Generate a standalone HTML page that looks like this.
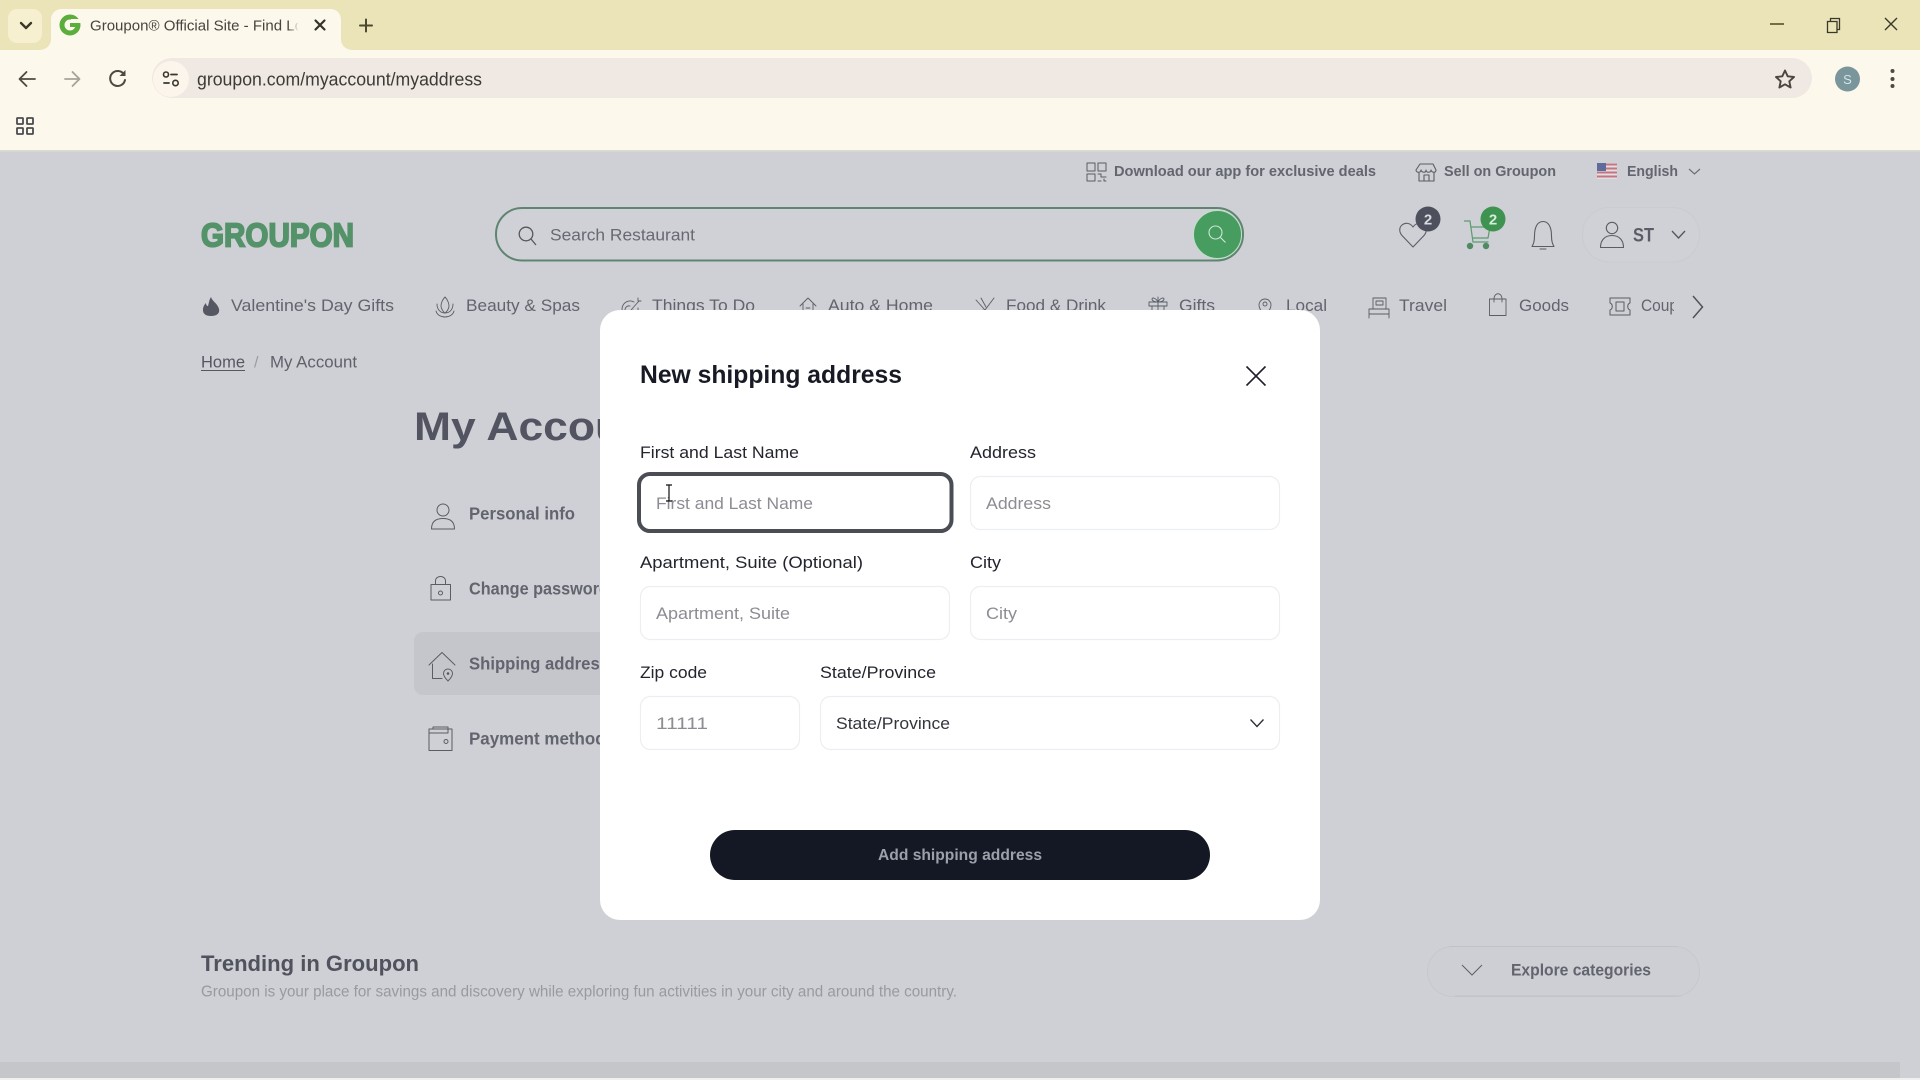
<!DOCTYPE html>
<html lang="en"><head><meta charset="utf-8"><title>Groupon - My Account</title>
<style>
html,body{margin:0;padding:0;width:1920px;height:1080px;overflow:hidden;background:#cfd0d5}
svg{display:block;position:absolute;left:0;top:0}
text{font-family:"Liberation Sans",sans-serif;white-space:pre}
.ic{fill:none;stroke:#5a5c66;stroke-linecap:round;stroke-linejoin:round}
.nav{font-size:17px;fill:#62646f}
.side{font-size:17.5px;font-weight:700;fill:#62646f}
.top{font-size:15px;font-weight:700;fill:#63656f}
.lab{font-size:17px;fill:#23252e}
.ph{font-size:17px;fill:#8b8d93}
.inp{fill:#fff;stroke:#eceef1;stroke-width:1.2}
</style></head><body>
<svg width="1920" height="1080" viewBox="0 0 1920 1080" xmlns="http://www.w3.org/2000/svg">
<defs>
<linearGradient id="fade" x1="0" x2="1" y1="0" y2="0"><stop offset="0" stop-color="#fdf8ec" stop-opacity="0"/><stop offset=".6" stop-color="#fdf8ec"/><stop offset="1" stop-color="#fdf8ec"/></linearGradient>
<clipPath id="cmy"><rect x="400" y="380" width="200" height="100"/></clipPath>
<clipPath id="ccoup"><rect x="1600" y="280" width="74" height="50"/></clipPath>
</defs>

<!-- browser chrome -->
<rect width="1920" height="50" fill="#ebe4b8"/>
<rect y="50" width="1920" height="100" fill="#fdf8ec"/>
<rect x="8" y="9" width="34" height="34" rx="9" fill="#f7f0d0"/>
<path d="M21 23l5 5 5-5" fill="none" stroke="#3a3828" stroke-width="2.4" stroke-linecap="round" stroke-linejoin="round"/>
<path d="M38 50c8 0 13-4 13-11V20c0-7 5-11 11-11h268c7 0 11 5 11 11v19c0 7 5 11 13 11z" fill="#fdf8ec"/>
<circle cx="70" cy="25" r="8" fill="none" stroke="#5cae3c" stroke-width="5"/>
<rect x="70" y="23" width="10" height="4" fill="#5cae3c"/>
<path d="M71 19h10v4H71z" fill="#fdf8ec"/>
<text x="90" y="30.500" font-size="15" fill="#45443e" textLength="213" lengthAdjust="spacingAndGlyphs">Groupon® Official Site - Find Lo</text>
<rect x="288" y="12" width="18" height="28" fill="url(#fade)"/>
<path d="M315.500 20.500l9 9m0-9l-9 9" stroke="#33322b" stroke-width="2.200" stroke-linecap="round"/>
<path d="M366 19.500v12M360 25.500h12" stroke="#4a4830" stroke-width="2" stroke-linecap="round"/>
<path d="M1770 24h14" stroke="#6a5f3c" stroke-width="1.800"/>
<path d="M1827.500 21.500h9.500v11h-9.500z M1830.500 21v-2.500h9v11h-2.500" fill="none" stroke="#3a3828" stroke-width="1.300"/>
<path d="M1885 18l12 12m0-12l-12 12" stroke="#3a3828" stroke-width="1.400"/>

<rect x="152" y="58" width="1660" height="40" rx="20" fill="#efe8e3"/>
<circle cx="171" cy="79" r="18" fill="#fbf5ec"/>
<path d="M171 74.500h6M164 83h5" stroke="#38362f" stroke-width="1.800" fill="none" stroke-linecap="round"/>
<circle cx="166" cy="74.500" r="2.500" fill="none" stroke="#38362f" stroke-width="1.600"/>
<circle cx="175.500" cy="83" r="2.700" fill="none" stroke="#38362f" stroke-width="1.600"/>
<path d="M35 79H20m6.500-7l-7 7 7 7" fill="none" stroke="#4c4a42" stroke-width="1.800" stroke-linecap="round" stroke-linejoin="round"/>
<path d="M65 79h14m-6.500-7l7 7-7 7" fill="none" stroke="#a6a39a" stroke-width="1.800" stroke-linecap="round" stroke-linejoin="round"/>
<path d="M124 74.500a7.500 7.500 0 1 0 1 5.500" fill="none" stroke="#4c4a42" stroke-width="2" stroke-linecap="round"/>
<path d="M125.500 70v6h-6z" fill="#4c4a42"/>
<text x="197" y="85.500" font-size="18" fill="#3c3b36" textLength="285" lengthAdjust="spacingAndGlyphs">groupon.com/myaccount/myaddress</text>
<path d="M1785 70.500l2.700 5.800 6.300.7-4.700 4.300 1.300 6.200-5.600-3.200-5.600 3.200 1.300-6.200-4.700-4.300 6.300-.7z" fill="none" stroke="#4c4640" stroke-width="1.900" stroke-linejoin="round"/>
<ellipse cx="1847.500" cy="79" rx="12.500" ry="12.500" fill="#7a959c"/>
<text x="1847.500" y="84" font-size="13" fill="#cfe6ea" text-anchor="middle">S</text>
<circle cx="1892.500" cy="71" r="2" fill="#4c4a42"/><circle cx="1892.500" cy="79" r="2" fill="#4c4a42"/><circle cx="1892.500" cy="86" r="2" fill="#4c4a42"/>
<g fill="none" stroke="#4a4c50" stroke-width="1.800"><rect x="17" y="118" width="6" height="6" rx=".5"/><rect x="27" y="118" width="6" height="6" rx=".5"/><rect x="17" y="128" width="6" height="6" rx=".5"/><rect x="27" y="128" width="6" height="6" rx=".5"/></g>

<!-- page (dimmed) -->
<rect y="150" width="1920" height="930" fill="#cfd0d5"/>
<rect y="150" width="1920" height="1.500" fill="#dcdcd0"/>

<!-- top bar -->
<g class="ic" stroke-width="1"><rect x="1087" y="163" width="8" height="8"/><rect x="1098" y="163" width="8" height="8"/><rect x="1087" y="174" width="8" height="7"/><path d="M1098 174h3v3h5M1098 181h3M1104 179v2h2"/></g>
<text class="top" x="1114" y="176" textLength="262" lengthAdjust="spacingAndGlyphs">Download our app for exclusive deals</text>
<path class="ic" stroke-width="1.100" d="M1420 164h13l3 6c0 3-4 3-5 0 0 3-5 3-5 0 0 3-4 3-5 0 0 3-5 3-5 0zM1419 173v8h15v-8M1424 181v-6h5v6"/>
<text class="top" x="1444" y="176" textLength="112" lengthAdjust="spacingAndGlyphs">Sell on Groupon</text>
<g><rect x="1597" y="163" width="20" height="16" fill="#dfe0e6"/><path d="M1597 164.500h20M1597 168.500h20M1597 172.500h20M1597 176.500h20" stroke="#c8747f" stroke-width="2"/><rect x="1597" y="163" width="9" height="8" fill="#5d6c9a"/></g>
<text class="top" x="1627" y="176" textLength="51" lengthAdjust="spacingAndGlyphs">English</text>
<path d="M1689 169l5.500 5 5.500-5" fill="none" stroke="#6c6e78" stroke-width="1.200"/>

<!-- logo + search -->
<text x="201" y="246.500" font-size="33" font-weight="700" fill="#54926a" stroke="#54926a" stroke-width="1.800" textLength="153" lengthAdjust="spacingAndGlyphs">GROUPON</text>
<rect x="496" y="208" width="747" height="52.500" rx="26" fill="#cfd1d6" stroke="#5f8571" stroke-width="2"/>
<circle cx="526" cy="234" r="6.800" fill="none" stroke="#55575f" stroke-width="1.300"/><path d="M531 239l5 6" stroke="#55575f" stroke-width="1.300"/>
<text x="550" y="240.500" font-size="17" fill="#676973" textLength="145" lengthAdjust="spacingAndGlyphs">Search Restaurant</text>
<circle cx="1217.500" cy="234.500" r="24" fill="#479c60" stroke="#bfe0c8" stroke-width="1"/>
<circle cx="1215.500" cy="232.500" r="6.500" fill="none" stroke="#cfe6d6" stroke-width="1.100"/><path d="M1220.500 237.500l5 5" stroke="#cfe6d6" stroke-width="1.100"/>

<!-- header icons -->
<path class="ic" stroke-width="1.100" d="M1413 247l-11-11.500c-3-3.500-3-8 0-10.500 3-2.500 8-2.500 11 2 3-4.500 8-4.500 11-2 3 2.500 3 7 0 10.500z"/>
<circle cx="1428" cy="219" r="12.500" fill="#4e505d"/>
<text x="1428" y="224.500" font-size="15" font-weight="700" fill="#d9dae0" text-anchor="middle">2</text>
<path d="M1464 221h6l3 21h15.500M1471 227h19l-2 11h-16" fill="none" stroke="#5c9a70" stroke-width="1.200"/>
<circle cx="1470" cy="246" r="3.200" fill="#4f8a64"/><circle cx="1486" cy="246" r="3.200" fill="#4f8a64"/>
<circle cx="1493" cy="219" r="12.500" fill="#3f9350"/>
<text x="1493" y="224.500" font-size="15" font-weight="700" fill="#d5ecd9" text-anchor="middle">2</text>
<path class="ic" stroke-width="1.100" d="M1532 246.500c2-3 2.500-6 2.500-10.500 0-9 3-14.500 8.500-14.500s8.500 5.500 8.500 14.500c0 4.500.5 7.500 2.500 10.500zM1540 249h6"/>
<rect x="1582.500" y="207.500" width="117" height="54.500" rx="27" fill="#cfd1d7" stroke="#c9cbd0" stroke-width="1"/>
<circle cx="1612" cy="228" r="5.700" class="ic" stroke-width="1.100"/>
<path class="ic" stroke-width="1.100" d="M1600.500 247.500c0-7 4-12 11.500-12s11.500 5 11.500 12z"/>
<text x="1633" y="241.500" font-size="19" font-weight="700" fill="#5a5c68" textLength="21" lengthAdjust="spacingAndGlyphs">ST</text>
<path d="M1672 231l6.500 7 6.500-7" fill="none" stroke="#53555f" stroke-width="1.300"/>

<!-- nav -->
<path d="M211 297c1 4 7 7 8 12 1 5-3 7-8 7-5 0-8.500-2-8-7 .3-3 2-5 3-6 0 2 1 3 2 3 1-3 1-6 3-9z" fill="#555763"/>
<text class="nav" x="231" y="311" textLength="163" lengthAdjust="spacingAndGlyphs">Valentine's Day Gifts</text>
<path class="ic" stroke-width=".9" d="M445 297c-3 3-4 7-4 9s2 6 4 7c2-1 4-5 4-7s-1-6-4-9zM437 304c0 5 3 9 8 9s8-4 8-9M436 311c1 4 5 6 9 6s8-2 9-6"/>
<text class="nav" x="466" y="311" textLength="114" lengthAdjust="spacingAndGlyphs">Beauty &amp; Spas</text>
<path class="ic" stroke-width=".9" d="M634 302a8 8 0 1 0 4 6M630 306a4 4 0 1 0 3 4M631 310l8-9M638 298v3h3"/>
<text class="nav" x="652" y="311" textLength="103" lengthAdjust="spacingAndGlyphs">Things To Do</text>
<path class="ic" stroke-width=".9" d="M800 306l8-8 8 8M803 304v10h10v-10M806 308h4"/>
<text class="nav" x="828" y="311" textLength="105" lengthAdjust="spacingAndGlyphs">Auto &amp; Home</text>
<path class="ic" stroke-width=".9" d="M976 300l9 10 9-12M981 298l5 9M986 314l-3-4"/>
<text class="nav" x="1006" y="311" textLength="100" lengthAdjust="spacingAndGlyphs">Food &amp; Drink</text>
<path class="ic" stroke-width=".9" d="M1149 302h18v4h-18zM1158 297v20M1152 306v10h12v-10M1158 302c-2-4-6-5-6-3s3 3 6 3c2-4 6-5 6-3s-3 3-6 3"/>
<text class="nav" x="1179" y="311" textLength="36" lengthAdjust="spacingAndGlyphs">Gifts</text>
<path class="ic" stroke-width=".9" d="M1265 316c-3-4-6-7-6-11a6 6 0 0 1 12 0c0 4-3 7-6 11z"/><circle class="ic" stroke-width=".9" cx="1265" cy="304" r="2"/>
<text class="nav" x="1286" y="311" textLength="41" lengthAdjust="spacingAndGlyphs">Local</text>
<path class="ic" stroke-width=".9" d="M1373 309v-11h13v11M1369 314v-5h20v5zM1369 314v4M1389 314v4M1376 301h7v4h-7z"/>
<text class="nav" x="1399" y="311" textLength="48" lengthAdjust="spacingAndGlyphs">Travel</text>
<path class="ic" stroke-width=".9" d="M1489.500 299h16.500v16.500h-16.500zM1494 302v-3c0-7 8-7 8 0v3"/>
<text class="nav" x="1519" y="311" textLength="50" lengthAdjust="spacingAndGlyphs">Goods</text>
<path class="ic" stroke-width="1" d="M1610 298h20v5c-3 1-3 6 0 7v5h-20v-5c3-1 3-6 0-7zM1616 302h8v9h-8z"/>
<text class="nav" x="1641" y="311" clip-path="url(#ccoup)" textLength="62" lengthAdjust="spacingAndGlyphs">Coupons</text>
<path d="M1693 296l9.500 11-9.500 11" fill="none" stroke="#4f515d" stroke-width="1.500"/>

<!-- breadcrumb -->
<text x="201" y="367.500" font-size="16.500" fill="#555763" textLength="44" lengthAdjust="spacingAndGlyphs">Home</text>
<rect x="201" y="370" width="44" height="1" fill="#555763"/>
<text x="254" y="367.500" font-size="16" fill="#9a9ca4">/</text>
<text x="270" y="367.500" font-size="16.500" fill="#5e606b" textLength="87" lengthAdjust="spacingAndGlyphs">My Account</text>

<!-- sidebar -->
<text x="414" y="440" font-size="40" font-weight="700" fill="#525462" clip-path="url(#cmy)" textLength="250" lengthAdjust="spacingAndGlyphs">My Account</text>
<circle class="ic" stroke-width="1" cx="443" cy="510" r="6"/>
<path class="ic" stroke-width="1" d="M431.500 529c0-7 4-10.500 11.500-10.500s11.500 3.500 11.500 10.500z"/>
<text class="side" x="469" y="519.500" textLength="106" lengthAdjust="spacingAndGlyphs">Personal info</text>
<path class="ic" stroke-width="1" d="M431 584.500h19.500v15.500H431zM435.500 584v-3c0-6 10-6 10 0v3"/><circle class="ic" stroke-width="1" cx="440.500" cy="593" r="2"/>
<text class="side" x="469" y="594.500" textLength="140" lengthAdjust="spacingAndGlyphs">Change password</text>
<rect x="414" y="632" width="200" height="63" rx="9" fill="#c5c6cb"/>
<path class="ic" stroke-width="1" d="M429 665l13-12.500 13 12.500M432.500 664v14.500H442"/><path class="ic" stroke-width="1" d="M448 681c-3-3-4.500-5-4.500-7.500a4.500 4.500 0 0 1 9 0c0 2.500-1.500 4.500-4.500 7.500z"/><circle cx="448" cy="673.500" r="1.300" fill="#53555f"/>
<text class="side" x="469" y="669.500" textLength="140" lengthAdjust="spacingAndGlyphs">Shipping address</text>
<path class="ic" stroke-width="1" d="M429 729h23v21.500h-23zM433 729v-2h15v6H429M448 727v6"/><circle class="ic" stroke-width="1" cx="446" cy="741.500" r="2"/>
<text class="side" x="469" y="744.500" textLength="146" lengthAdjust="spacingAndGlyphs">Payment methods</text>

<!-- footer section -->
<text x="201" y="971" font-size="22" font-weight="700" fill="#50525e" textLength="218" lengthAdjust="spacingAndGlyphs">Trending in Groupon</text>
<text x="201" y="996.500" font-size="15.500" fill="#989aa2" textLength="756" lengthAdjust="spacingAndGlyphs">Groupon is your place for savings and discovery while exploring fun activities in your city and around the country.</text>
<rect x="1427.500" y="946.500" width="272" height="50" rx="25" fill="#cdcfd4" stroke="#c6c8cd" stroke-width="1"/>
<path d="M1449 946.500h228M1455 996h226" stroke="#c0c2c7" stroke-width="1"/>
<path d="M1462 965l10 10 10-10" fill="none" stroke="#5c5e68" stroke-width="1"/>
<text x="1511" y="975.500" font-size="17" font-weight="700" fill="#62646f" textLength="140" lengthAdjust="spacingAndGlyphs">Explore categories</text>
<rect y="1062" width="1900" height="16" fill="#c5c6c9"/>
<rect y="1078" width="1920" height="2" fill="#eff1ef"/>

<!-- modal -->
<rect x="600" y="310" width="720" height="610" rx="20" fill="#fff"/>
<text x="640" y="383" font-size="25" font-weight="700" fill="#171a24" textLength="262" lengthAdjust="spacingAndGlyphs">New shipping address</text>
<path d="M1246.500 366.500l19 19m0-19l-19 19" stroke="#1d1f28" stroke-width="1.600" fill="none"/>

<text class="lab" x="640" y="458" textLength="159" lengthAdjust="spacingAndGlyphs">First and Last Name</text>
<rect x="639" y="474" width="312.500" height="57" rx="11" fill="#fff" stroke="#4b4d55" stroke-width="4"/>
<text class="ph" x="656" y="509" textLength="157" lengthAdjust="spacingAndGlyphs">First and Last Name</text>
<path d="M666 485h6M666 501h6M669 485v16" stroke="#111" stroke-width="1.200" fill="none"/>

<text class="lab" x="970" y="458" textLength="66" lengthAdjust="spacingAndGlyphs">Address</text>
<rect class="inp" x="970.500" y="476.500" width="309" height="53" rx="10"/>
<text class="ph" x="986" y="509" textLength="65" lengthAdjust="spacingAndGlyphs">Address</text>

<text class="lab" x="640" y="568" textLength="223" lengthAdjust="spacingAndGlyphs">Apartment, Suite (Optional)</text>
<rect class="inp" x="640.500" y="586.500" width="309" height="53" rx="10"/>
<text class="ph" x="656" y="619" textLength="134" lengthAdjust="spacingAndGlyphs">Apartment, Suite</text>

<text class="lab" x="970" y="568" textLength="31" lengthAdjust="spacingAndGlyphs">City</text>
<rect class="inp" x="970.500" y="586.500" width="309" height="53" rx="10"/>
<text class="ph" x="986" y="619" textLength="31" lengthAdjust="spacingAndGlyphs">City</text>

<text class="lab" x="640" y="678" textLength="67" lengthAdjust="spacingAndGlyphs">Zip code</text>
<rect class="inp" x="640.500" y="696.500" width="159" height="53" rx="10"/>
<text class="ph" x="656" y="729" textLength="52" lengthAdjust="spacingAndGlyphs">11111</text>

<text class="lab" x="820" y="678" textLength="116" lengthAdjust="spacingAndGlyphs">State/Province</text>
<rect class="inp" x="820.500" y="696.500" width="459" height="53" rx="10"/>
<text x="836" y="729" font-size="17" fill="#34363e" textLength="114" lengthAdjust="spacingAndGlyphs">State/Province</text>
<path d="M1250.500 719.500l6.500 7 6.500-7" fill="none" stroke="#2a2c34" stroke-width="1.300"/>

<rect x="710" y="830" width="500" height="50" rx="25" fill="#131824"/>
<text x="878" y="860" font-size="16" font-weight="700" fill="#9da0a8" textLength="164" lengthAdjust="spacingAndGlyphs">Add shipping address</text>
</svg>
</body></html>
